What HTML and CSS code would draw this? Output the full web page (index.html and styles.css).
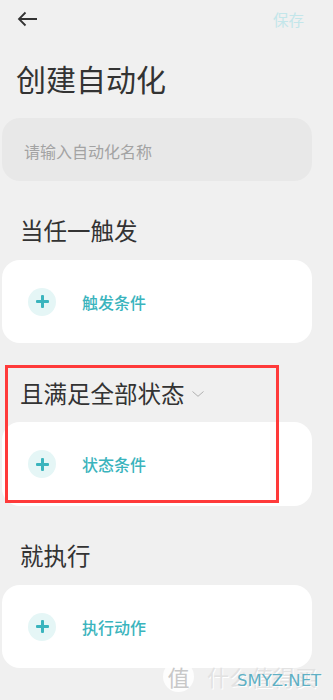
FILE: index.html
```html
<!DOCTYPE html>
<html lang="zh">
<head>
<meta charset="utf-8">
<link rel="stylesheet" href="styles.css">
</head>
<body>
<div class="page">
  <header class="topbar">
    <svg class="back" width="21" height="16" viewBox="0 0 21 16"><path d="M20 8H2M8.5 1.5L2 8l6.5 6.5" fill="none" stroke="#333" stroke-width="1.8"/></svg>
    <span class="save">保存</span>
  </header>
  <h1 class="title">创建自动化</h1>
  <div class="name-input">请输入自动化名称</div>

  <h2 class="section">当任一触发</h2>
  <div class="card">
    <span class="plus"></span><span class="label">触发条件</span>
  </div>

  <h2 class="section sec2">且满足全部状态<svg class="chev" width="12" height="6" viewBox="0 0 12 6"><path d="M0.5 0.5L6 5.3 11.5 0.5" fill="none" stroke="#b0b0b0" stroke-width="1"/></svg></h2>
  <div class="card card2">
    <span class="plus"></span><span class="label">状态条件</span>
  </div>

  <h2 class="section">就执行</h2>
  <div class="card">
    <span class="plus"></span><span class="label">执行动作</span>
  </div>

  <div class="highlight"></div>
  <div class="watermark">
    <span class="wm-circle">值</span><span class="wm-text">什么值得买</span>
    <span class="wm-site">SMYZ.NET</span>
  </div>
</div>
</body>
</html>
```
FILE: styles.css
```css
* { box-sizing: border-box; }
html, body { margin: 0; padding: 0; }
body {
  background: #f0f0f0;
  font-family: "Noto Sans CJK SC", "Noto Sans", sans-serif;
  color: #333;
  width: 333px;
  height: 700px;
  overflow: hidden;
}
.page {
  position: relative;
  padding-left: 2px;
  width: 333px;
  height: 700px;
}
.topbar {
  height: 38px;
  display: flex;
  align-items: center;
  justify-content: space-between;
  padding: 0 29px 0 15px;
}
.back { display: block; margin-top: 0; }
.save {
  font-size: 15.5px;
  color: #c3e6ea;
  line-height: 20px;
}
.title {
  margin: 20px 0 0;
  padding-left: 14px;
  height: 40px;
  line-height: 40px;
  font-size: 30px;
  font-weight: 400;
  color: #333;
}
.name-input {
  margin-top: 20px;
  width: 310px;
  height: 63px;
  border-radius: 18px;
  background: #e8e8e8;
  display: flex;
  align-items: center;
  padding-left: 22px;
  padding-top: 2px;
  font-size: 16px;
  color: #a3a3a3;
}
.section {
  margin: 29px 0 0;
  height: 40px;
  line-height: 40px;
  padding-left: 18px;
  font-size: 23.5px;
  font-weight: 400;
  color: #333;
  display: flex;
  align-items: center;
}
.sec2 { margin-top: 30px; }
.chev { margin-left: 7px; margin-top: 2px; }
.card {
  margin-top: 10px;
  width: 310px;
  height: 83px;
  border-radius: 18px;
  background: #fff;
  display: flex;
  align-items: center;
  padding-left: 26px;
}
.card2 { margin-top: 9px; height: 84px; }
.plus {
  position: relative;
  width: 28px;
  height: 28px;
  border-radius: 50%;
  background: #e5f6f6;
  flex: none;
}
.plus::before, .plus::after {
  content: "";
  position: absolute;
  background: #3ab4bd;
  border-radius: 1px;
}
.plus::before { left: 7.5px; top: 12.5px; width: 13px; height: 3px; }
.plus::after { left: 12.5px; top: 7.5px; width: 3px; height: 13px; }
.label {
  margin-left: 26px;
  font-size: 16px;
  font-weight: 500;
  color: #3ab4bd;
}
.highlight {
  position: absolute;
  left: 5px;
  top: 365px;
  width: 274px;
  height: 138px;
  border: 3px solid #ff3a3a;
}
.watermark {
  position: absolute;
  left: 163px;
  top: 660px;
  width: 170px;
  height: 36px;
}
.wm-circle {
  position: absolute;
  left: 0;
  top: 1px;
  width: 31px;
  height: 31px;
  border-radius: 50%;
  background: rgba(255,255,255,0.85);
  color: #c8c8c8;
  font-size: 22px;
  line-height: 31px;
  text-align: center;
}
.wm-text {
  position: absolute;
  left: 44px;
  top: 2px;
  font-size: 22px;
  line-height: 28px;
  color: #e2e2e2;
  text-shadow: 1px 1px 0 #fff;
}
.wm-site {
  position: absolute;
  left: 74px;
  top: 11px;
  font-family: "DejaVu Sans", sans-serif;
  font-size: 16.5px;
  line-height: 20px;
  color: #5fb0c4;
  text-shadow: 1px 1px 0 rgba(255,255,255,0.8);
}
```
